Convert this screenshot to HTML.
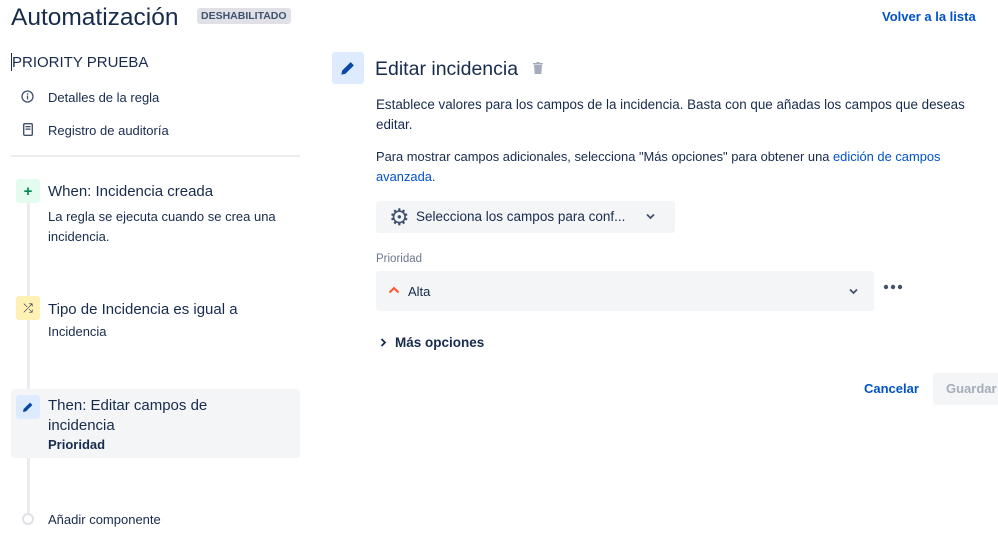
<!DOCTYPE html>
<html><head><meta charset="utf-8"><style>
*{margin:0;padding:0;box-sizing:border-box}
body{width:998px;height:533px;overflow:hidden;background:#fff;font-family:"Liberation Sans",sans-serif;color:#172b4d;position:relative}
.a{position:absolute;white-space:nowrap}
.ic{position:absolute;width:24px;height:24px;border-radius:3px;display:flex;align-items:center;justify-content:center}
</style></head><body>
<div class="a" style="left:11px;top:4px;font-size:24.5px;color:#172b4d">Automatización</div>
<div class="a" style="left:197px;top:8px;height:16px;padding:0 4px;background:#dfe1e6;border-radius:3px;font-size:10.5px;font-weight:bold;line-height:16px;color:#42526e">DESHABILITADO</div>
<div class="a" style="left:882px;top:9px;font-size:13px;font-weight:bold;color:#0052cc">Volver a la lista</div>

<div class="a" style="left:11px;top:53px;width:1px;height:18px;background:#172b4d"></div>
<div class="a" style="left:12px;top:54px;font-size:15px">PRIORITY PRUEBA</div>
<svg class="a" style="left:21px;top:90px" width="13" height="13" viewBox="0 0 13 13"><circle cx="6.5" cy="6.5" r="5.5" fill="none" stroke="#42526e" stroke-width="1.3"/><rect x="5.9" y="5.5" width="1.3" height="4" fill="#42526e"/><rect x="5.9" y="3.3" width="1.3" height="1.3" fill="#42526e"/></svg>
<div class="a" style="left:48px;top:90px;font-size:13px;color:#172b4d">Detalles de la regla</div>
<svg class="a" style="left:23px;top:123px" width="10" height="13" viewBox="0 0 10 13"><rect x="0.7" y="0.7" width="8.6" height="11.6" rx="1" fill="none" stroke="#42526e" stroke-width="1.4"/><rect x="2.5" y="3" width="5" height="1.3" fill="#42526e"/><rect x="2.5" y="5.5" width="5" height="1.3" fill="#42526e"/></svg>
<div class="a" style="left:48px;top:123px;font-size:13px">Registro de auditoría</div>
<div class="a" style="left:11px;top:155px;width:289px;height:2px;background:#ebecf0"></div>

<div class="a" style="left:27px;top:190px;width:3px;height:330px;background:#ebecf0"></div>
<div class="a" style="left:11px;top:389px;width:289px;height:69px;background:#f4f5f7;border-radius:3px"></div>
<div class="ic" style="left:16px;top:179px;background:#e3fcef;color:#00875a;font-size:15px;font-weight:bold">+</div>
<div class="a" style="left:48px;top:183px;font-size:15px">When: Incidencia creada</div>
<div class="a" style="left:48px;top:207px;font-size:13px;line-height:20px">La regla se ejecuta cuando se crea una<br>incidencia.</div>
<div class="ic" style="left:16px;top:296px;background:#fff0b3;color:#172b4d;font-size:12px">⤮</div>
<div class="a" style="left:48px;top:301px;font-size:15px">Tipo de Incidencia es igual a</div>
<div class="a" style="left:48px;top:324px;font-size:13px">Incidencia</div>
<div class="ic" style="left:16px;top:395px;background:#deebff"><svg width="12" height="12" viewBox="0 0 12 12"><path d="M1 11l0.6-3L8 1.6l2.4 2.4L4 10.4z" fill="#0747a6"/></svg></div>
<div class="a" style="left:48px;top:396px;font-size:15px;line-height:20px">Then: Editar campos de<br>incidencia</div>
<div class="a" style="left:48px;top:437px;font-size:13px;font-weight:bold">Prioridad</div>
<div class="a" style="left:22px;top:513px;width:12px;height:12px;border:2px solid #dfe1e6;border-radius:50%;background:#fff"></div>
<div class="a" style="left:48px;top:512px;font-size:13px">Añadir componente</div>

<div class="ic" style="left:332px;top:52px;width:32px;height:32px;background:#deebff"><svg width="16" height="16" viewBox="0 0 12 12"><path d="M1 11l0.6-3L8 1.6l2.4 2.4L4 10.4z" fill="#0747a6"/></svg></div>
<div class="a" style="left:375px;top:58px;font-size:19.5px">Editar incidencia</div>
<svg class="a" style="left:533px;top:62px" width="10" height="12" viewBox="0 0 10 12"><rect x="0" y="1" width="10" height="1.5" fill="#a5adba"/><rect x="3.5" y="0" width="3" height="1.5" fill="#a5adba"/><path d="M1 3h8l-0.7 9H1.7z" fill="#a5adba"/></svg>
<div class="a" style="left:376px;top:95px;font-size:13.4px;line-height:20px;color:#172b4d">Establece valores para los campos de la incidencia. Basta con que añadas los campos que deseas<br>editar.</div>
<div class="a" style="left:376px;top:147px;font-size:12.9px;line-height:20px">Para mostrar campos adicionales, selecciona "Más opciones" para obtener una <span style="color:#0052cc">edición de campos</span><br><span style="color:#0052cc">avanzada</span>.</div>

<div class="a" style="left:376px;top:201px;width:299px;height:32px;background:#f4f5f7;border-radius:3px"></div>
<div class="a" style="left:389px;top:205px;font-size:23px;color:#42526e;line-height:24px">⚙</div>
<div class="a" style="left:416px;top:209px;font-size:13.5px;color:#172b4d">Selecciona los campos para conf...</div>
<svg class="a" style="left:646px;top:213px" width="9" height="7" viewBox="0 0 9 7"><path d="M1 1.5l3.5 3.5 3.5-3.5" fill="none" stroke="#42526e" stroke-width="1.8"/></svg>

<div class="a" style="left:376px;top:253px;font-size:11.5px;color:#6b778c">Prioridad</div>
<div class="a" style="left:376px;top:271px;width:498px;height:40px;background:#f4f5f7;border-radius:3px"></div>
<svg class="a" style="left:388px;top:286px" width="12" height="8" viewBox="0 0 12 8"><path d="M1.5 6.5L6 2l4.5 4.5" fill="none" stroke="#ff5630" stroke-width="2"/></svg>
<div class="a" style="left:408px;top:284px;font-size:13px">Alta</div>
<svg class="a" style="left:849px;top:288px" width="9" height="7" viewBox="0 0 9 7"><path d="M1 1.5l3.5 3.5 3.5-3.5" fill="none" stroke="#42526e" stroke-width="1.8"/></svg>
<svg class="a" style="left:883px;top:284px" width="20" height="6" viewBox="0 0 20 6"><circle cx="3" cy="3" r="2.2" fill="#42526e"/><circle cx="10" cy="3" r="2.2" fill="#42526e"/><circle cx="17" cy="3" r="2.2" fill="#42526e"/></svg>

<svg class="a" style="left:380px;top:338px" width="7" height="9" viewBox="0 0 7 9"><path d="M1.5 1l3.5 3.5L1.5 8" fill="none" stroke="#172b4d" stroke-width="1.8"/></svg>
<div class="a" style="left:395px;top:335px;font-size:13.5px;font-weight:bold">Más opciones</div>

<div class="a" style="left:864px;top:381px;font-size:13px;font-weight:bold;color:#0052cc">Cancelar</div>
<div class="a" style="left:933px;top:373px;width:70px;height:32px;background:#f4f5f7;border-radius:3px;padding:8px 0 0 13px;font-size:13px;font-weight:bold;color:#a5adba">Guardar</div>
</body></html>
